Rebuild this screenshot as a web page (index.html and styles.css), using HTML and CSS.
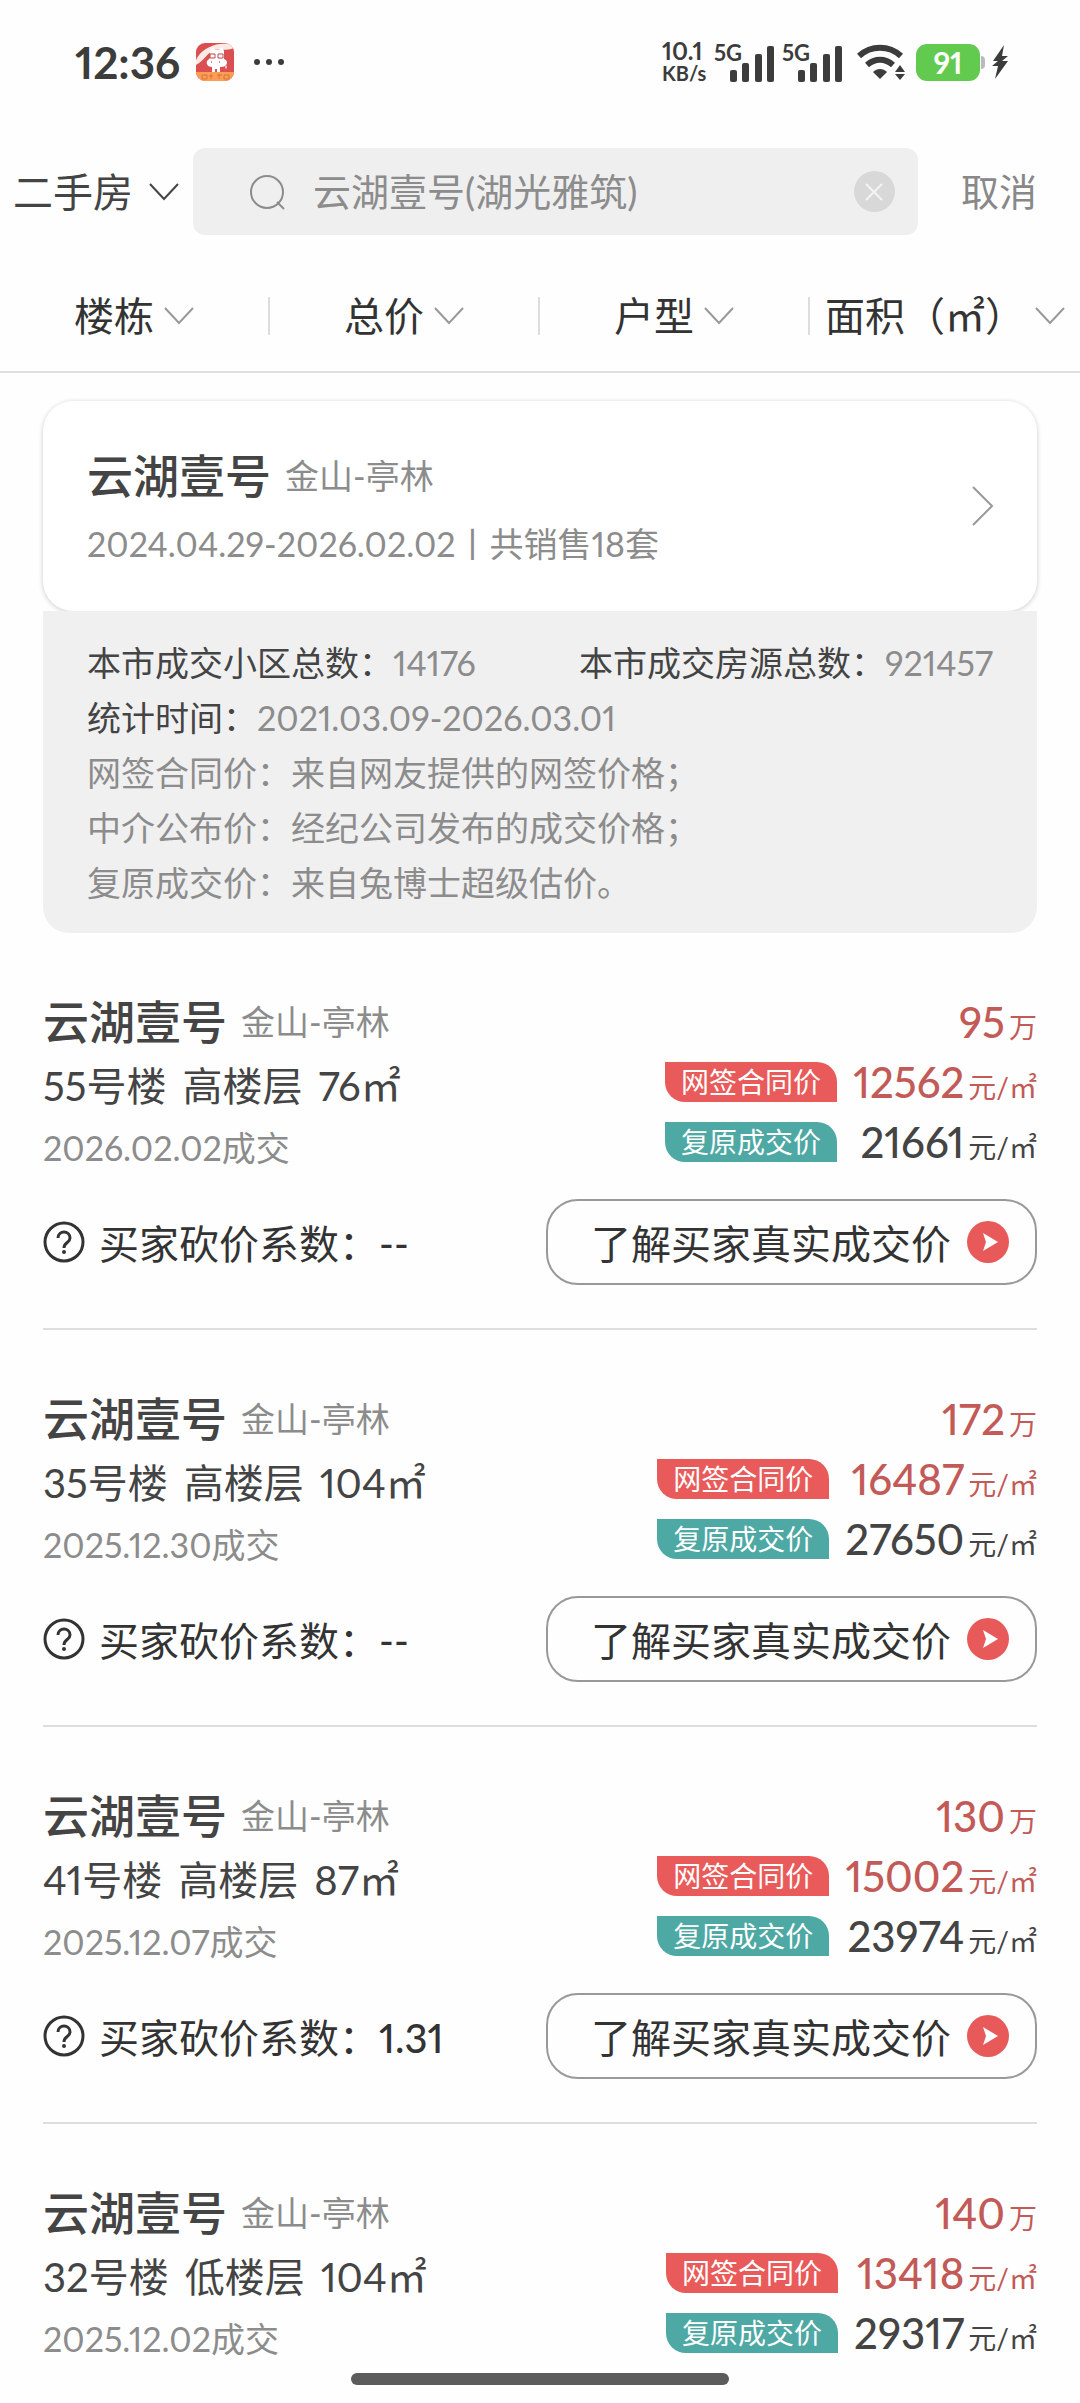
FILE: index.html
```html
<!DOCTYPE html>
<html lang="zh-CN">
<head>
<meta charset="utf-8">
<meta name="viewport" content="width=device-width">
<title>云湖壹号 成交记录</title>
<link rel="stylesheet" href="styles.css">
</head>
<body>
<svg class="symbols" aria-hidden="true">
  <symbol id="chevron" viewBox="0 0 30 18"><path d="M1 1l14 15L29 1" fill="none" stroke="currentColor" stroke-width="2"/></symbol>
  <symbol id="signal" viewBox="0 0 45 36"><rect x="0" y="24" width="7" height="12" rx="2"/><rect x="12" y="17" width="7" height="19" rx="2"/><rect x="25" y="8" width="7" height="28" rx="2"/><rect x="37" y="0" width="7" height="36" rx="2"/></symbol>
  <symbol id="help" viewBox="0 0 42 42"><circle cx="21" cy="21" r="19" fill="none" stroke="currentColor" stroke-width="3"/><path d="M15 17c0-8 12-8 12 0 0 5-6 4-6 10" fill="none" stroke="currentColor" stroke-width="3"/><circle cx="21" cy="31" r="2" fill="currentColor"/></symbol>
  <symbol id="go" viewBox="0 0 42 42"><circle cx="21" cy="21" r="21" fill="#e85a5a"/><path d="M16 12l15 9-15 9 3-9z" fill="#fff"/></symbol>
</svg>

<div class="statusbar">
  <time class="clock">12:36</time>
  <svg class="app" viewBox="0 0 38 38"><defs><clipPath id="appclip"><rect width="38" height="38" rx="9"/></clipPath></defs><g clip-path="url(#appclip)"><rect width="38" height="38" fill="#d94f52"/><path d="M0 17C4 8 14 2 24 1l14-1v5C30 8 25 6 18 7 12 9 8 18 0 22z" fill="#fbe9e4"/><path d="M14 7l3-3 2 3h4l3-3 2 4v8c3 1 4 4 2 6-2 2-4 2-6 2v5h-3v-3h-2v3h-3v-5c-4 0-6-3-5-6l3-3z" fill="#fff"/><path d="M14 11h5v4h-5zM22 11h5v4h-5z" fill="#fff" stroke="#c24448"/><path d="M15 19h1M23 19h1" stroke="#7a3034"/><path d="M29 24h2" stroke="#f7b7c4" stroke-width="3"/><rect y="29" width="38" height="9" fill="#fb9d55"/><path d="M6 32h5v4H6zM13 33h4M15 31v5M21 32h5M23 31v5M28 32h5v4h-5z" fill="none" stroke="#d8743a"/></g></svg>
  <svg class="more" viewBox="0 0 30 6" fill="#3c3c3c"><circle cx="3" cy="3" r="3"/><circle cx="15" cy="3" r="3"/><circle cx="27" cy="3" r="3"/></svg>
  <div class="indicators">
    <div class="speed"><span class="rate">10.1</span><span>KB/s</span></div>
    <div class="cell"><span>5G</span><svg><use href="#signal"/></svg></div>
    <div class="cell"><span>5G</span><svg><use href="#signal"/></svg></div>
    <svg class="wifi" viewBox="0 0 50 36" fill="none" stroke="#3c3c3c" stroke-width="6"><path d="M2 12c12-11 30-11 42 0"/><path d="M10 21c8-7 18-7 26 0"/><path d="M16 28c4-4 10-4 14 0l-7 7z" fill="#3c3c3c" stroke="none"/><path d="M38 28l5-7 5 7zM38 30l5 6 5-6z" fill="#3c3c3c" stroke="none"/></svg>
    <div class="battery"><span>91</span></div>
    <svg class="bolt" viewBox="0 0 16 34" fill="#3c3c3c"><path d="M12 0L1 16h5l-6 5h6L3 34l13-18h-6l6-5h-6z"/></svg>
  </div>
</div>

<header class="searchbar">
  <button class="category" type="button"><span>二手房</span><svg class="chevron"><use href="#chevron"/></svg></button>
  <div class="search">
    <svg class="lens" viewBox="0 0 36 36" fill="none" stroke="#8c8c8c" stroke-width="2"><circle cx="18" cy="18" r="16"/><path d="M28 28l7 7"/></svg>
    <input type="text" aria-label="搜索小区" value="云湖壹号(湖光雅筑)">
    <button class="clear" type="button" aria-label="清除"><svg viewBox="0 0 18 18" stroke="#f4f4f4" stroke-width="2"><path d="M1 1l16 16M17 1L1 17"/></svg></button>
  </div>
  <button class="cancel" type="button"><span>取消</span></button>
</header>

<nav class="filters">
  <button type="button">楼栋<svg class="chevron"><use href="#chevron"/></svg></button>
  <button type="button">总价<svg class="chevron"><use href="#chevron"/></svg></button>
  <button type="button">户型<svg class="chevron"><use href="#chevron"/></svg></button>
  <button type="button">面积（㎡）<svg class="chevron"><use href="#chevron"/></svg></button>
</nav>

<main>
  <a class="estate" href="#records">
    <div>
      <h1 class="name">云湖壹号 <small>金山-亭林</small></h1>
      <p class="period">2024.04.29-2026.02.02丨共销售18套</p>
    </div>
    <svg class="arrow" viewBox="0 0 22 40" fill="none" stroke="#999" stroke-width="2"><path d="M1 1l19 19L1 39"/></svg>
  </a>
  <section class="stats">
    <div class="totals"><p><b>本市成交小区总数：</b>14176</p><p><b>本市成交房源总数：</b>921457</p></div>
    <p><b>统计时间：</b>2021.03.09-2026.03.01</p>
    <p>网签合同价：来自网友提供的网签价格；</p>
    <p>中介公布价：经纪公司发布的成交价格；</p>
    <p>复原成交价：来自兔博士超级估价。</p>
  </section>

  <section id="records">
    <article class="record">
      <div class="summary">
        <div class="home">
          <h2 class="name">云湖壹号 <small>金山-亭林</small></h2>
          <p class="unit"><span>55号楼</span> <span>高楼层</span> <span>76㎡</span></p>
          <p class="date">2026.02.02成交</p>
        </div>
        <div class="prices">
          <p class="price total">95<small>万</small></p>
          <span class="tag signed">网签合同价</span><p class="price red">12562<small>元/㎡</small></p>
          <span class="tag restored">复原成交价</span><p class="price">21661<small>元/㎡</small></p>
        </div>
      </div>
      <div class="actions">
        <p class="factor"><svg><use href="#help"/></svg><span>买家砍价系数：<b>--</b></span></p>
        <button class="reveal" type="button">了解买家真实成交价<svg><use href="#go"/></svg></button>
      </div>
    </article>

    <article class="record">
      <div class="summary">
        <div class="home">
          <h2 class="name">云湖壹号 <small>金山-亭林</small></h2>
          <p class="unit"><span>35号楼</span> <span>高楼层</span> <span>104㎡</span></p>
          <p class="date">2025.12.30成交</p>
        </div>
        <div class="prices">
          <p class="price total">172<small>万</small></p>
          <span class="tag signed">网签合同价</span><p class="price red">16487<small>元/㎡</small></p>
          <span class="tag restored">复原成交价</span><p class="price">27650<small>元/㎡</small></p>
        </div>
      </div>
      <div class="actions">
        <p class="factor"><svg><use href="#help"/></svg><span>买家砍价系数：<b>--</b></span></p>
        <button class="reveal" type="button">了解买家真实成交价<svg><use href="#go"/></svg></button>
      </div>
    </article>

    <article class="record">
      <div class="summary">
        <div class="home">
          <h2 class="name">云湖壹号 <small>金山-亭林</small></h2>
          <p class="unit"><span>41号楼</span> <span>高楼层</span> <span>87㎡</span></p>
          <p class="date">2025.12.07成交</p>
        </div>
        <div class="prices">
          <p class="price total">130<small>万</small></p>
          <span class="tag signed">网签合同价</span><p class="price red">15002<small>元/㎡</small></p>
          <span class="tag restored">复原成交价</span><p class="price">23974<small>元/㎡</small></p>
        </div>
      </div>
      <div class="actions">
        <p class="factor"><svg><use href="#help"/></svg><span>买家砍价系数：<b>1.31</b></span></p>
        <button class="reveal" type="button">了解买家真实成交价<svg><use href="#go"/></svg></button>
      </div>
    </article>

    <article class="record">
      <div class="summary">
        <div class="home">
          <h2 class="name">云湖壹号 <small>金山-亭林</small></h2>
          <p class="unit"><span>32号楼</span> <span>低楼层</span> <span>104㎡</span></p>
          <p class="date">2025.12.02成交</p>
        </div>
        <div class="prices">
          <p class="price total">140<small>万</small></p>
          <span class="tag signed">网签合同价</span><p class="price red">13418<small>元/㎡</small></p>
          <span class="tag restored">复原成交价</span><p class="price">29317<small>元/㎡</small></p>
        </div>
      </div>
    </article>
  </section>
</main>
<div class="homebar"></div>
</body>
</html>
```

FILE: styles.css
```css
* { box-sizing: border-box; }

body {
  margin: 0;
  min-height: 100vh;
  background: #fefefe;
  color: #444;
  font-family: Lato, "Noto Sans CJK SC", sans-serif;
  font-size: 34px;
  font-variant-numeric: proportional-nums;
}

h1, h2, p { margin: 0; }
b { font-weight: 500; }
svg { display: block; flex: none; }

button {
  padding: 0;
  border: 0;
  background: none;
  color: inherit;
  font: inherit;
  white-space: nowrap;
}

.symbols { position: absolute; width: 0; height: 0; }

/* Status bar */
.statusbar {
  display: flex;
  align-items: center;
  height: 148px;
  padding: 0 72px 24px 75px;
  color: #3c3c3c;
  font-weight: 700;
}
.clock { font-size: 44px; }
.app { width: 38px; height: 38px; margin: 0 20px 0 16px; }
.more { width: 30px; height: 6px; }
.indicators { display: flex; align-items: center; margin-left: auto; }
.speed { display: grid; width: 52px; font-size: 20px; line-height: 23px; }
.rate { font-size: 24px; }
.cell {
  display: grid;
  width: 60px;
  margin-right: 8px;
  font-size: 22px;
  line-height: 20px;
}
.cell span, .cell svg { grid-area: 1 / 1; }
.cell svg { width: 45px; height: 36px; margin: 3px 0 0 16px; fill: #3c3c3c; }
.wifi { width: 50px; height: 36px; margin-left: 7px; }
.battery {
  position: relative;
  width: 64px;
  height: 37px;
  margin: 0 12px 0 9px;
  border-radius: 11px;
  background: #62cb4f;
  color: #fff;
  font-size: 30px;
  line-height: 36px;
  text-align: center;
}
.battery::after {
  content: "";
  position: absolute;
  top: 12px;
  right: -5px;
  width: 4px;
  height: 13px;
  border-radius: 0 4px 4px 0;
  background: #bbb;
}
.bolt { width: 16px; height: 34px; }

/* Search */
.searchbar { display: flex; align-items: center; padding: 0 43px 0 13px; }
.searchbar span { padding-bottom: 4px; }
.category { display: flex; align-items: center; gap: 16px; font-size: 40px; }
.chevron { width: 30px; height: 18px; }
.search {
  display: flex;
  flex: 1;
  align-items: center;
  min-width: 0;
  height: 87px;
  margin: 0 43px 0 14px;
  padding: 0 23px 0 56px;
  border-radius: 12px;
  background: #efefef;
}
.lens { width: 36px; height: 36px; }
.search input {
  flex: 1;
  min-width: 0;
  margin: 0 28px;
  padding: 0 0 4px;
  border: 0;
  outline: 0;
  background: none;
  color: #8c8c8c;
  font: inherit;
  font-size: 38px;
}
.clear {
  display: grid;
  place-items: center;
  width: 41px;
  height: 41px;
  border-radius: 50%;
  background: #d8d8d8;
}
.clear svg { width: 18px; height: 18px; }
.cancel { display: flex; color: #888; font-size: 38px; }

/* Filters */
.filters {
  display: grid;
  grid-template-columns: repeat(4, 1fr);
  padding: 62px 0 36px;
  border-bottom: 2px solid #dedede;
}
.filters button {
  display: flex;
  align-items: center;
  justify-content: center;
  gap: 10px;
  height: 38px;
  border-right: 2px solid #ddd;
  color: #333;
  font-size: 40px;
  line-height: 38px;
}
.filters button:last-child { border-right: 0; }
.filters .chevron { color: #999; }

/* Estate card */
main { padding: 28px 43px 0; }
.estate {
  display: flex;
  align-items: center;
  justify-content: space-between;
  height: 210px;
  padding: 0 43px 0 44px;
  border-radius: 30px;
  background: #fff;
  box-shadow: 0 1px 5px rgba(0, 0, 0, 0.2);
  color: inherit;
  text-decoration: none;
}
.name {
  display: flex;
  align-items: center;
  gap: 14px;
  font-size: 46px;
  font-weight: 500;
  line-height: 64px;
}
.name small { color: #8c8c8c; font-size: 34px; font-weight: 400; }
.estate .name { padding-top: 6px; }
.period { padding-top: 6px; color: #8c8c8c; line-height: 60px; }
.arrow { width: 22px; height: 40px; }

.stats {
  position: relative;
  padding: 24px 44px 23px;
  border-radius: 0 0 26px 26px;
  background: #f0f0f0;
  color: #8c8c8c;
  line-height: 55px;
}
.stats b { color: #444; font-weight: 400; }
.totals { display: flex; justify-content: space-between; }

/* Sale records */
.record { padding: 57px 0 43px; border-bottom: 2px solid #dedede; }
.record:last-child { padding-bottom: 24px; border-bottom: 0; }
.summary { display: flex; justify-content: space-between; }
.unit { display: flex; gap: 16px; font-size: 40px; line-height: 64px; }
.date { color: #8c8c8c; line-height: 60px; }

.prices {
  display: grid;
  grid-template-columns: auto auto;
  grid-auto-rows: 60px;
  align-items: center;
  column-gap: 16px;
  padding-top: 2px;
}
.total { grid-column: 1 / -1; }
.price { font-size: 42px; font-weight: 500; line-height: 60px; text-align: right; }
.price small { margin-left: 4px; font-size: 28px; font-weight: 400; line-height: 28px; }
.total, .red { color: #c25a57; }
.tag {
  padding: 0 16px;
  border-radius: 0 20px 0 20px;
  color: #fff;
  font-size: 28px;
  line-height: 40px;
}
.signed { background: #e95a5a; }
.restored { background: #4ea8a3; }

.actions {
  display: flex;
  align-items: center;
  justify-content: space-between;
  padding-top: 21px;
  color: #333;
  font-size: 40px;
}
.factor { display: flex; align-items: center; gap: 14px; }
.factor svg, .reveal svg { width: 42px; height: 42px; }
.reveal {
  display: flex;
  align-items: center;
  gap: 16px;
  height: 86px;
  padding: 0 26px 0 43px;
  border: 2px solid #999;
  border-radius: 32px;
}

.homebar {
  position: fixed;
  bottom: 18px;
  left: 50%;
  width: 378px;
  height: 12px;
  margin-left: -189px;
  border-radius: 6px;
  background: #5c5c5c;
}
```
